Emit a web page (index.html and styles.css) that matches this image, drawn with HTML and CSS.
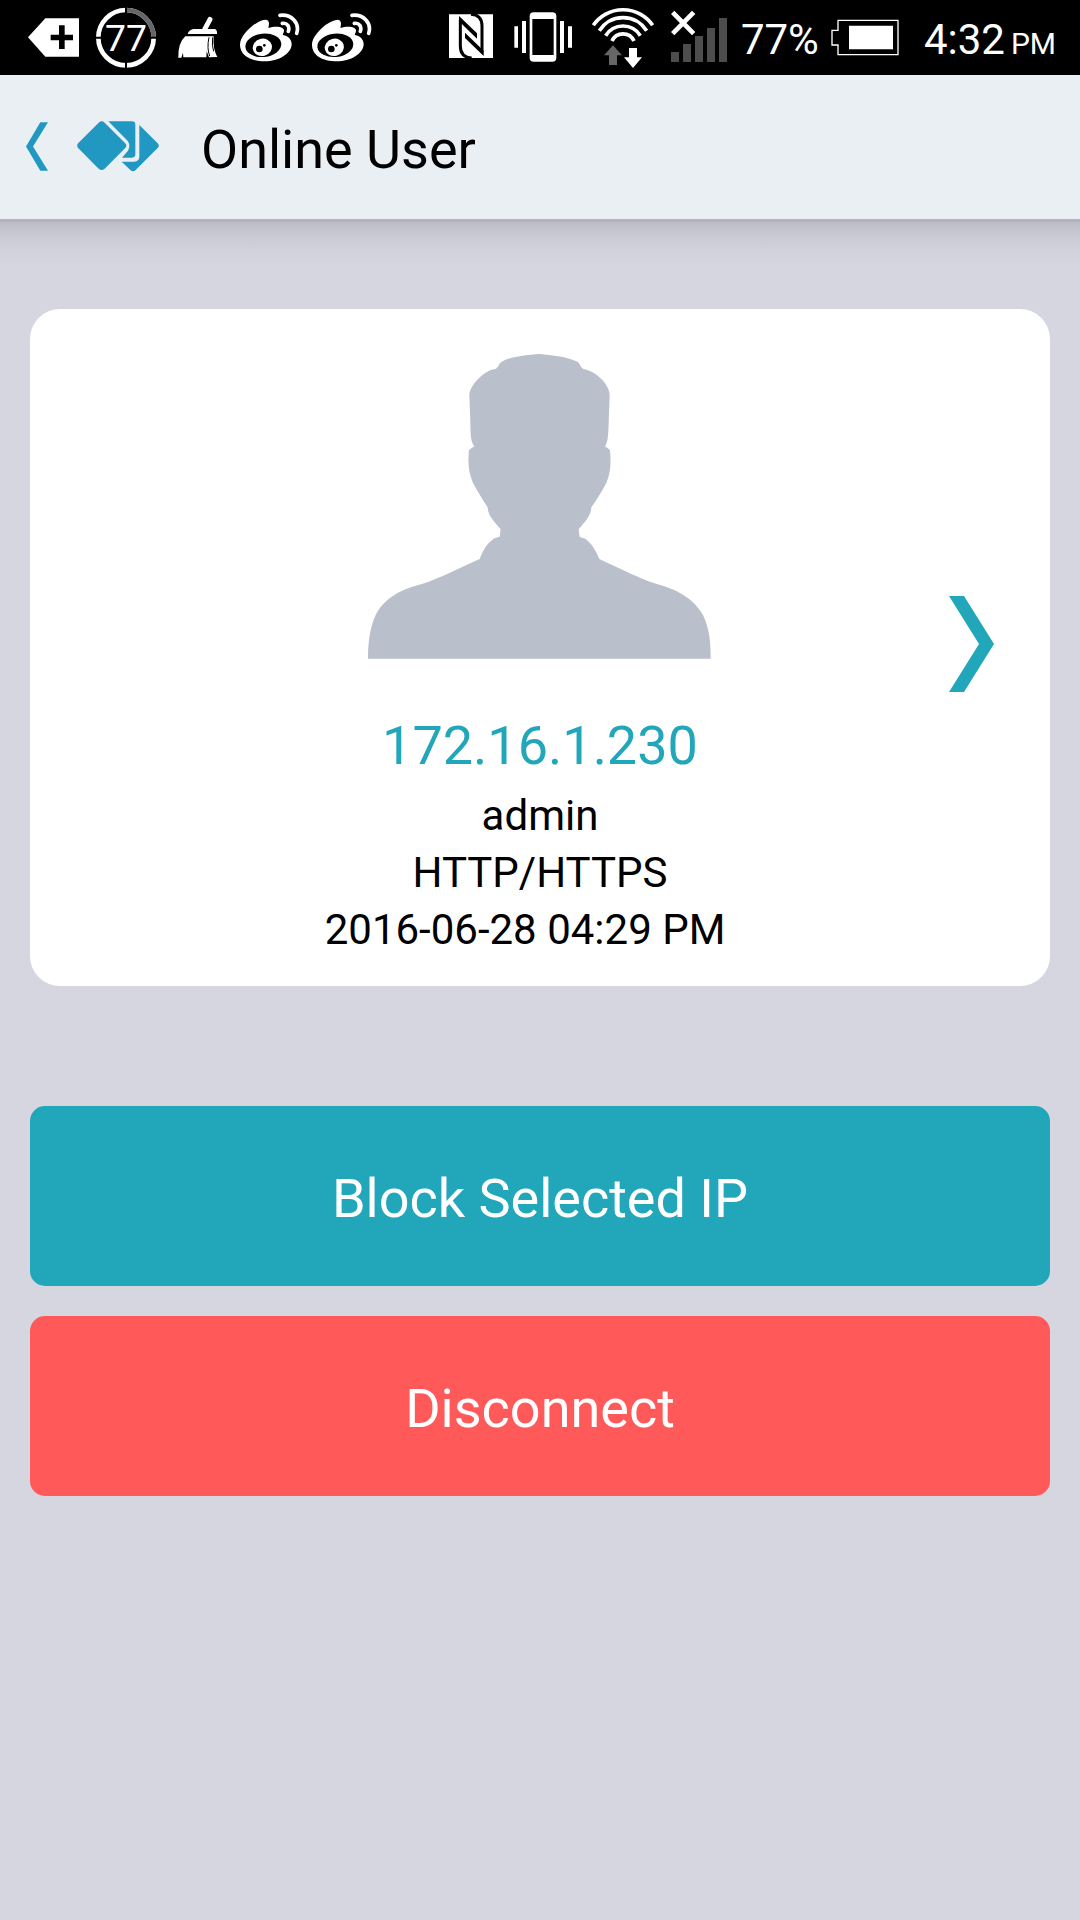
FILE: index.html
```html
<!DOCTYPE html>
<html lang="en">
<head>
  <meta charset="UTF-8">
  <meta name="viewport" content="width=device-width, initial-scale=1.0">
  <title>Online User</title>
  <link rel="stylesheet" href="styles.css">
</head>
<body>
  <!-- status bar -->
  <div class="status-bar">
    <div class="status-group">
      <svg class="status-icon" viewBox="72 0 180 225">
        <path fill="#fff" d="M84 112L136 55H237V170H136Z"/>
        <path d="M152 104H219V121H152ZM177 76H194V147H177Z"/>
      </svg>
      <svg class="status-icon" viewBox="288 0 180 225">
        <circle cx="378" cy="113" r="83" fill="none" stroke="#fff" stroke-width="14"/>
        <path d="M378 30A83 83 0 0 1 461 113" fill="none" stroke="#666" stroke-width="14"/>
        <path d="M378 20V40M378 186V206M285 113H305M451 113H471" stroke="#000" stroke-width="6"/>
        <text class="ring-text" x="378" y="154" text-anchor="middle">77</text>
      </svg>
      <svg class="status-icon" viewBox="504 0 180 225">
        <path d="M630 58L614 88" stroke="#fff" stroke-width="15" stroke-linecap="round"/>
        <path fill="#fff" d="M563 102Q566 90 580 87H644Q652 88 651 102Z"/>
        <path fill="#fff" d="M556 109H641Q638 146 652 171L627 172L620 154L619 172H550L549 158L544 173H535Q534 128 556 109Z"/>
        <path d="M627 112Q620 145 629 168M638 112Q635 138 641 154" fill="none" stroke="#000" stroke-width="3"/>
      </svg>
      <svg class="status-icon" viewBox="120 0 180 225">
        <path fill="#fff" d="M120 135C119 104 170 59 198 59C209 61 208 73 205 84C226 77 252 79 252 92C252 98 247 102 249 105C264 107 275 119 275 132C275 161 235 184 195 184C150 184 121 166 120 135Z"/>
        <ellipse cx="190" cy="136" rx="54" ry="35" transform="rotate(-6 190 136)"/>
        <ellipse cx="187" cy="142" rx="29" ry="26" fill="#fff" transform="rotate(-15 187 142)"/>
        <circle cx="178" cy="147" r="10"/>
        <circle cx="193" cy="136" r="4"/>
        <path d="M240 46C275 42 300 70 290 100M247 70C262 68 270 80 265 94" fill="none" stroke="#fff" stroke-width="11" stroke-linecap="round"/>
      </svg>
      <svg class="status-icon" viewBox="120 0 180 225">
        <path fill="#fff" d="M120 135C119 104 170 59 198 59C209 61 208 73 205 84C226 77 252 79 252 92C252 98 247 102 249 105C264 107 275 119 275 132C275 161 235 184 195 184C150 184 121 166 120 135Z"/>
        <ellipse cx="190" cy="136" rx="54" ry="35" transform="rotate(-6 190 136)"/>
        <ellipse cx="187" cy="142" rx="29" ry="26" fill="#fff" transform="rotate(-15 187 142)"/>
        <circle cx="178" cy="147" r="10"/>
        <circle cx="193" cy="136" r="4"/>
        <path d="M240 46C275 42 300 70 290 100M247 70C262 68 270 80 265 94" fill="none" stroke="#fff" stroke-width="11" stroke-linecap="round"/>
      </svg>
    </div>

    <div class="status-group">
      <svg class="status-icon" viewBox="30 0 180 225">
        <path fill="#fff" d="M54 43H186V174H54Z"/>
        <path d="M122 174Q88 172 88 138V60M120 43Q153 45 153 78V158" fill="none" stroke="#000" stroke-width="9"/>
        <path d="M84 48L138 100V116L84 64ZM102 98L158 152V168L102 114Z"/>
      </svg>
      <svg class="status-icon" viewBox="246 0 180 225">
        <rect x="296" y="37" width="80" height="148" rx="12" fill="#fff"/>
        <rect x="304" y="57" width="64" height="108"/>
        <path fill="#fff" d="M250 79H261V143H250ZM273 63H285V159H273ZM387 63H399V159H387ZM411 79H423V143H411Z"/>
      </svg>
      <svg class="status-icon wifi" viewBox="462 0 216 225">
        <path d="M487 76A108 108 0 0 1 665 76M505 92A84 84 0 0 1 647 92M524 107A61 61 0 0 1 628 107M543 123A36 36 0 0 1 609 123" fill="none" stroke="#fff" stroke-width="11"/>
        <path fill="#666" d="M546 136L573 166H558V195H534V166H519Z"/>
        <path fill="#fff" d="M594 144H618V172H633L606 204L579 172H594Z"/>
      </svg>
      <svg class="status-icon" viewBox="714 0 180 225">
        <path fill="#4d4d4d" d="M720 156H744V186H720ZM756 132H780V186H756ZM792 108H816V186H792ZM828 84H852V186H828ZM864 54H888V186H864Z"/>
        <path d="M725 37L788 101M788 37L725 101" stroke="#fff" stroke-width="14"/>
      </svg>
      <span class="status-text">77%</span>
      <svg class="status-icon battery" viewBox="303 0 207 225">
        <path d="M324 61H504V164H324V135H306V91H324Z" fill="none" stroke="#fff" stroke-width="4"/>
        <path fill="#fff" d="M357 77H489V148H357Z"/>
      </svg>
      <div class="status-text clock"><span>4:32</span><small>PM</small></div>
    </div>
  </div>

  <header>
    <button class="back-button" aria-label="Back">
      <svg width="22" height="49" viewBox="78 156 66 146"><path fill="#2098c1" d="M78 229L121 156H144L99 229L144 302H121Z"/></svg>
    </button>
    <svg class="logo" viewBox="231 152 246 153">
      <path d="M296 157Q305 149 314 157L375 218Q383 226 375 234L314 295Q305 303 296 295L235 234Q228 226 235 218Z"/>
      <path d="M325 153H396Q406 153 406 163V252Q406 262 396 262H366L384 241Q392 227 384 213Z"/>
      <path d="M418 164L473 219Q480 226 473 233L407 299Q399 307 391 299L365 274H402Q418 274 418 258Z"/>
    </svg>
    <h1>Online User</h1>
  </header>

  <main>
    <!-- user card -->
    <section class="user-card">
      <div class="user-info">
        <svg class="avatar" viewBox="51 43 1029 915">
          <path d="M51 957C51 925 53 870 75 824C103 770 160 746 215 732C262 718 325 685 386 658C398 628 408 612 430 596L446 591L449 569C430 546 410 527 410 503C395 480 380 455 366 430C352 395 350 370 354 331L370 320C360 305 359 295 358 250L355 165C357 135 400 91 435 87C444 80 443 72 452 66C480 50 530 46 565 43C600 46 655 52 682 68C688 76 690 85 697 88C735 93 775 135 776 165L773 250C772 290 770 308 762 320L777 331C780 370 780 395 766 430C750 460 737 480 721 503C721 527 701 547 683 569L686 592L703 597C725 615 733 630 745 658C808 687 868 718 915 732C970 747 1026 772 1056 826C1077 870 1079 915 1079 957Z"/>
        </svg>
        <div class="user-ip">172.16.1.230</div>
        <div class="user-line">admin</div>
        <div class="user-line">HTTP/HTTPS</div>
        <div class="user-line user-time">2016-06-28 04:29 PM</div>
      </div>
      <button class="next-button" aria-label="Next user">
        <svg width="45" height="104" viewBox="0 0 45 104"><path fill="#21a6ba" d="M0 0H15L45 48L15 96H0L30 48Z"/></svg>
      </button>
    </section>

    <div class="actions">
      <button class="action-button block">Block Selected IP</button>
      <button class="action-button disconnect">Disconnect</button>
    </div>
  </main>
</body>
</html>
```
FILE: styles.css
```css
* {
  box-sizing: border-box;
}

body {
  margin: 0;
  min-height: 100vh;
  background: #d6d6e0;
  font-family: Roboto, sans-serif;
  color: #000;
}

button {
  border: none;
  background: none;
  padding: 0;
  font-family: inherit;
  cursor: pointer;
}

svg {
  display: block;
}

/* Status bar */
.status-bar {
  display: flex;
  justify-content: space-between;
  height: 75px;
  padding: 0 24px;
  background: #000;
  color: #fff;
}

.status-group {
  display: flex;
  align-items: center;
  gap: 12px;
}

.status-icon {
  width: 60px;
  height: 75px;
}

.wifi {
  width: 72px;
}

.battery {
  width: 69px;
}

.ring-text {
  font-size: 112px;
  fill: #fff;
}

.status-text {
  padding-top: 4px;
  font-size: 42px;
  white-space: nowrap;
}

.clock {
  display: flex;
  align-items: baseline;
  gap: 6px;
  margin-left: 12px;
}

.clock small {
  font-size: 30px;
}

/* Title bar */
header {
  display: flex;
  align-items: center;
  height: 144px;
  padding: 0 26px 2px;
  background: #eaeff4;
}

.logo {
  width: 82px;
  height: 51px;
  margin: 0 42px 0 29px;
  fill: #2098c1;
}

h1 {
  margin: 0;
  padding-top: 6px;
  font-size: 54px;
  font-weight: 400;
}

/* the gradient is the shadow under the title bar */
main {
  padding: 90px 30px 30px;
  background: linear-gradient(#b3b3bc 3px, #bcbcc6 3px, #c9c9d3 16px, #d1d1db 30px, #d6d6e0 48px);
}

.user-card {
  display: grid;
  grid-template-columns: 1fr auto 1fr;
  align-items: center;
  border-radius: 30px;
  background: #fff;
}

.user-info {
  grid-column: 2;
  display: flex;
  flex-direction: column;
  align-items: center;
  padding: 45px 0 28px;
}

.avatar {
  width: 343px;
  height: 305px;
  margin-bottom: 51px;
  fill: #babfcc;
}

.user-ip {
  margin-bottom: 5px;
  font-size: 54px;
  line-height: 72px;
  color: #21a6ba;
}

.user-line {
  font-size: 42px;
  line-height: 57px;
}

.user-time {
  padding-right: 30px;
}

.next-button {
  justify-self: end;
  margin-right: 56px;
}

/* Buttons */
.actions {
  display: flex;
  flex-direction: column;
  gap: 30px;
  margin-top: 120px;
}

.action-button {
  height: 180px;
  padding-top: 5px;
  border-radius: 15px;
  font-size: 54px;
  color: #fff;
}

.block {
  background: #21a6ba;
}

.disconnect {
  background: #ff5959;
}
```
